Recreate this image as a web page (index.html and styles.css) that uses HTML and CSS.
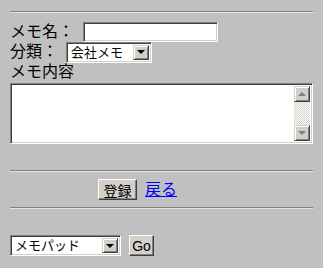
FILE: index.html
```html
<!DOCTYPE html>
<html lang="ja">
<head>
    <meta charset="UTF-8">
    <title>メモ登録</title>
    <link rel="stylesheet" href="styles.css">
</head>
<body>
    <hr class="rule rule-top">
    <form class="memo-form">
        <div class="field">
            <label class="label" for="memoName">メモ名：</label>
            <input id="memoName" class="text-input" type="text">
        </div>
        <div class="field">
            <span class="label">分類：</span>
            <div class="select select-kind">
                <span class="select-value">会社メモ</span>
                <span class="select-arrow"><span class="tri-down"></span></span>
            </div>
        </div>
        <div class="field">
            <span class="label">メモ内容</span>
        </div>
        <div class="memo-box">
            <textarea class="memo-text"></textarea>
            <div class="scrollbar">
                <span class="scroll-btn"><span class="tri-up"></span></span>
                <span class="scroll-track"></span>
                <span class="scroll-btn"><span class="tri-down gray"></span></span>
            </div>
        </div>
    </form>

    <hr class="rule rule-mid">
    <div class="actions">
        <button class="btn btn-submit" type="button">登録</button>
        <a class="back-link" href="#">戻る</a>
    </div>
    <hr class="rule rule-bottom">

    <div class="jump">
        <div class="select select-jump">
            <span class="select-value">メモパッド</span>
            <span class="select-arrow"><span class="tri-down"></span></span>
        </div>
        <button class="btn btn-go" type="button">Go</button>
    </div>
</body>
</html>
```

FILE: styles.css
```css
body {
    margin: 0;
    padding: 0 10px;
    background-color: #c0c0c0;
    font-family: "Liberation Sans", "Noto Sans CJK JP", sans-serif;
    font-size: 16px;
    color: #000;
}

.rule {
    height: 0;
    margin: 0;
    border: none;
    border-top: 1px solid #808080;
    border-bottom: 1px solid #e4e4e4;
}
.rule-top { margin-top: 11px; margin-bottom: 9px; }
.rule-mid { margin-top: 26px; margin-bottom: 7px; }
.rule-bottom { margin-top: 7px; margin-bottom: 26px; }

.memo-form {
    margin: 0;
}

.field {
    display: flex;
    align-items: center;
    height: 20px;
}

.label {
    line-height: 20px;
    white-space: nowrap;
}

.text-input {
    box-sizing: border-box;
    width: 135px;
    height: 20px;
    margin: 0 0 0 9px;
    padding: 0 2px;
    border: 1px solid;
    border-color: #808080 #fff #fff #808080;
    box-shadow: inset 1px 1px #404040, inset -1px -1px #d4d0c8;
    background: #fff;
    font-size: 13px;
    outline: none;
}

.select {
    box-sizing: border-box;
    display: flex;
    align-items: center;
    height: 21px;
    padding: 2px;
    border: 1px solid;
    border-color: #808080 #fff #fff #808080;
    box-shadow: inset 1px 1px #404040, inset -1px -1px #d4d0c8;
    background: #fff;
    font-size: 13px;
}
.select-kind {
    width: 86px;
    margin-left: 8px;
}
.select-jump {
    width: 111px;
}

.select-value {
    flex: 1;
    padding-left: 2px;
    line-height: 17px;
    white-space: nowrap;
    overflow: hidden;
}

.select-arrow,
.scroll-btn {
    box-sizing: border-box;
    display: flex;
    align-items: center;
    justify-content: center;
    width: 16px;
    height: 16px;
    background: #d4d0c8;
    border: 1px solid;
    border-color: #d4d0c8 #404040 #404040 #d4d0c8;
    box-shadow: inset 1px 1px #fff, inset -1px -1px #808080;
}
.select-arrow {
    height: 15px;
}

.tri-down {
    width: 0;
    height: 0;
    border-left: 4px solid transparent;
    border-right: 4px solid transparent;
    border-top: 4px solid #000;
}
.tri-down.gray {
    border-top-color: #808080;
}
.tri-up {
    width: 0;
    height: 0;
    border-left: 4px solid transparent;
    border-right: 4px solid transparent;
    border-bottom: 4px solid #808080;
}

.memo-box {
    box-sizing: border-box;
    display: flex;
    width: 303px;
    height: 61px;
    margin-top: 1px;
    padding: 2px;
    border: 1px solid;
    border-color: #808080 #fff #fff #808080;
    box-shadow: inset 1px 1px #404040, inset -1px -1px #d4d0c8;
    background: #fff;
}

.memo-text {
    flex: 1;
    border: none;
    padding: 1px;
    margin: 0;
    resize: none;
    outline: none;
    font-size: 13px;
    font-family: inherit;
}

.scrollbar {
    display: flex;
    flex-direction: column;
    width: 16px;
}
.scroll-track {
    flex: 1;
    background: repeating-conic-gradient(#fff 0 25%, #d4d0c8 0 50%) 0 0 / 2px 2px;
}

.actions {
    display: flex;
    align-items: center;
    height: 21px;
    padding-left: 88px;
}

.btn {
    box-sizing: border-box;
    height: 21px;
    margin: 0;
    padding: 0;
    background: #d4d0c8;
    border: 1px solid;
    border-color: #fff #404040 #404040 #fff;
    box-shadow: inset -1px -1px #808080;
    font-family: "Liberation Sans", "Noto Sans CJK JP", sans-serif;
    font-size: 14px;
    color: #000;
}
.btn-submit {
    width: 39px;
}
.btn-go {
    width: 25px;
    margin-left: 8px;
}

.back-link {
    margin-left: 8px;
    color: #0000ff;
    line-height: 20px;
}

.jump {
    display: flex;
    align-items: center;
    height: 21px;
}
```
